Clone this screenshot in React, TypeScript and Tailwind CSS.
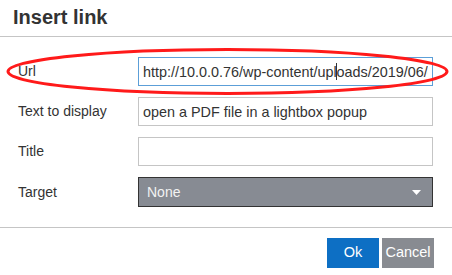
export default function App() {
  const rows = [
    { label: "Url", value: "http://10.0.0.76/wp-content/uploads/2019/06/open-a-pdf.pdf", focus: true },
    { label: "Text to display", value: "open a PDF file in a lightbox popup" },
    { label: "Title", value: "" },
  ];

  return (
    <div
      className="relative w-[452px] h-[275px] bg-white text-[#333] overflow-hidden"
      style={{ fontFamily: '"Liberation Sans", Arial, sans-serif' }}
    >
      {/* header */}
      <div className="h-[37px] border-b border-[#c5c5c5] pl-[13px] flex items-center">
        <h1 className="text-[20px] font-bold leading-none pb-[2px]">Insert link</h1>
      </div>

      {/* form */}
      <div className="pt-[20px] pl-[18px] pr-[19px] flex flex-col gap-[11px] h-[190px]">
        {rows.map((r) => (
          <div key={r.label} className="flex items-center h-[29px]">
            <label className="w-[120px] text-[14px]">{r.label}</label>
            <div className="relative">
              <input
                readOnly
                value={r.value}
                className={
                  "w-[295px] h-[29px] px-[4px] text-[14.4px] text-[#333] outline-none border " +
                  (r.focus ? "border-[#5c9fd8]" : "border-[#c5c5c5]")
                }
              />
              {r.focus && <span className="absolute left-[198px] top-[6px] w-px h-[17px] bg-[#333]" />}
            </div>
          </div>
        ))}
        <div className="flex items-center h-[30px]">
          <label className="w-[120px] text-[14px]">Target</label>
          <div className="w-[295px] h-[30px] bg-[#878b93] border border-[#333] flex items-center justify-between pl-[8px] pr-[11px]">
            <span className="text-[14px] text-[#f2f2f2]">None</span>
            <svg width="9" height="5" viewBox="0 0 9 5">
              <path d="M0 0h9L4.5 5z" fill="#fff" />
            </svg>
          </div>
        </div>
      </div>

      {/* footer */}
      <div className="border-t border-[#c5c5c5] flex justify-end gap-[3px] pt-[10px] pr-[18px]">
        <button className="w-[52px] h-[30px] bg-[#0d6fc4] text-white text-[14.5px]">Ok</button>
        <button className="w-[52px] h-[30px] bg-[#888b91] text-white text-[14.5px]">Cancel</button>
      </div>

      {/* red annotation */}
      <svg className="absolute left-0 top-0 pointer-events-none" width="452" height="275">
        <ellipse cx="227.5" cy="71.5" rx="219.5" ry="22" fill="none" stroke="#ff1a1a" strokeWidth="3" />
      </svg>
    </div>
  );
}
